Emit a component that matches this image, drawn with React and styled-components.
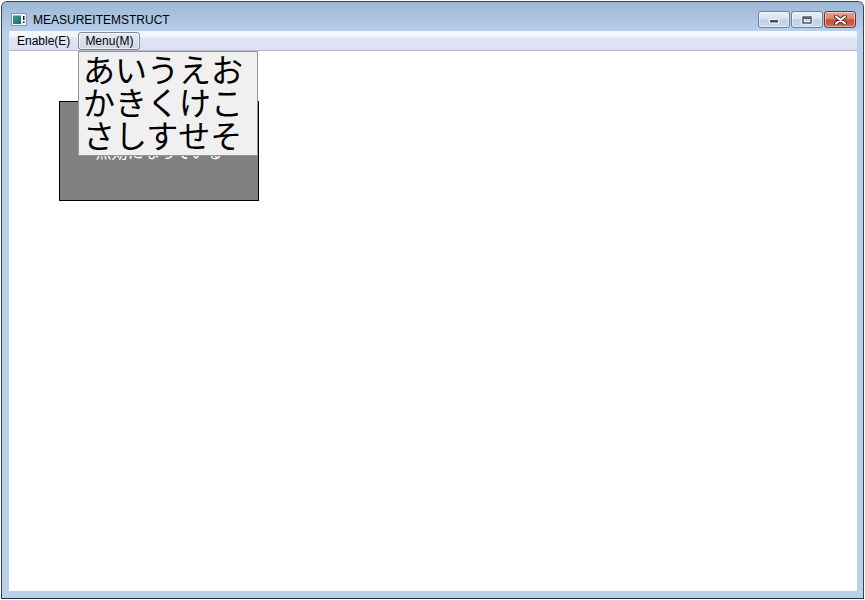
import React from 'react';
import styled, { createGlobalStyle } from 'styled-components';

const GlobalStyle = createGlobalStyle`
  html, body {
    margin: 0;
    padding: 0;
    background: #ffffff;
  }
  body {
    font-family: "Liberation Sans", "Noto Sans CJK JP", sans-serif;
  }
`;

const Desktop = styled.div`
  width: 865px;
  height: 600px;
  padding: 1px 0 0 1px;
  box-sizing: border-box;
  overflow: hidden;
`;

const Window = styled.div`
  width: 863px;
  height: 598px;
  box-sizing: border-box;
  border: 1px solid #3b4049;
  border-bottom-color: #17323f;
  border-radius: 6px 6px 0 0;
  background: #b9d1ea;
  display: flex;
  flex-direction: column;
  overflow: hidden;
`;

const TitleBar = styled.div`
  height: 29px;
  box-sizing: border-box;
  padding: 6px 7px 0 9px;
  display: flex;
  align-items: center;
  background: linear-gradient(to bottom, #9cb7d6, #b8cfe9);
`;

const Title = styled.span`
  margin-left: 6px;
  font-size: 12px;
  color: #000;
  white-space: nowrap;
`;

const CaptionGroup = styled.div`
  margin-left: auto;
  display: flex;
  gap: 1px;
`;

const CaptionButton = styled.div`
  width: 32px;
  height: 17px;
  box-sizing: border-box;
  border: 1px solid ${p => (p.$close ? '#7b3126' : '#6f809a')};
  border-radius: 3px;
  display: flex;
  align-items: center;
  justify-content: center;
  box-shadow: inset 0 0 0 1px rgba(255, 255, 255, 0.45);
  background: ${p =>
    p.$close
      ? 'linear-gradient(to bottom, #eaa593 0%, #d98470 45%, #c44c38 52%, #d26d56 100%)'
      : 'linear-gradient(to bottom, #e7eef8 0%, #d6e2f0 45%, #bfd1e7 52%, #cadaed 100%)'};
`;

const Frame = styled.div`
  flex: 1;
  display: flex;
  flex-direction: column;
  padding: 0 6px 7px 7px;
  min-height: 0;
`;

const MenuBar = styled.div`
  height: 20px;
  box-sizing: border-box;
  padding: 1px 0 0 1px;
  display: flex;
  gap: 1px;
  border-bottom: 1px solid #b3bbcb;
  background: linear-gradient(
    to bottom,
    #f6f8fc 0%,
    #f3f6fb 30%,
    #e0e6f4 36%,
    #dbe1f1 100%
  );
`;

const MenuItem = styled.div`
  padding: 0 6px;
  display: flex;
  align-items: center;
  font-size: 12px;
  color: #000;
  border: 1px solid ${p => (p.$open ? '#848b99' : 'transparent')};
  border-radius: 3px;
  background: ${p =>
    p.$open ? 'linear-gradient(to bottom, #e6eaf3, #cfd6e6)' : 'transparent'};
  box-shadow: ${p => (p.$open ? 'inset 0 0 0 1px rgba(255,255,255,0.55)' : 'none')};
`;

const Client = styled.div`
  flex: 1;
  position: relative;
  background: #ffffff;
  padding: 50px 0 0 50px;
  box-sizing: border-box;
`;

const DisabledBox = styled.div`
  width: 200px;
  height: 100px;
  box-sizing: border-box;
  background: #808080;
  border: 1px solid #000;
  color: #fff;
  font-family: "Noto Sans CJK JP", sans-serif;
  font-size: 16px;
  display: flex;
  align-items: center;
  justify-content: center;
`;

const Popup = styled.div`
  position: absolute;
  left: 69px;
  top: 0;
  width: 180px;
  height: 105px;
  box-sizing: border-box;
  background: #f0f0f0;
  border: 1px solid #979797;
  padding: 0 0 0 4px;
`;

const PopupItem = styled.div`
  height: 33px;
  line-height: 33px;
  overflow: hidden;
  font-family: "Noto Sans CJK JP", sans-serif;
  font-size: 32px;
  color: #000;
  white-space: nowrap;
`;

const AppIcon = () => (
  <svg width="16" height="14" viewBox="0 0 16 14">
    <defs>
      <linearGradient id="ig" x1="0" y1="0" x2="1" y2="1">
        <stop offset="0" stopColor="#3a9a8a" />
        <stop offset="1" stopColor="#1f6f6a" />
      </linearGradient>
    </defs>
    <rect x="0.5" y="0.5" width="15" height="12" fill="#f4f7fa" stroke="#8a96a4" />
    <rect x="2" y="2.5" width="8" height="8.5" fill="url(#ig)" />
    <rect x="12" y="3" width="1.5" height="4" fill="#111" />
    <rect x="12" y="8.5" width="1.5" height="1.5" fill="#111" />
  </svg>
);

const MinGlyph = () => (
  <svg width="12" height="9" viewBox="0 0 12 9">
    <rect x="1.5" y="4.5" width="9" height="3.5" fill="#3f4b5a" stroke="#fff" strokeWidth="1" />
  </svg>
);

const MaxGlyph = () => (
  <svg width="12" height="10" viewBox="0 0 12 10">
    <rect x="2" y="2" width="8" height="6" fill="none" stroke="#fff" strokeWidth="3" />
    <rect x="2" y="2" width="8" height="6" fill="none" stroke="#3f4b5a" strokeWidth="1.4" />
    <rect x="2.5" y="2.5" width="7" height="1.4" fill="#3f4b5a" />
  </svg>
);

const CloseGlyph = () => (
  <svg width="13" height="10" viewBox="0 0 13 10">
    <path d="M2 1.5 L11 8.5 M11 1.5 L2 8.5" stroke="#5a2018" strokeWidth="4" strokeLinecap="round" />
    <path d="M2 1.5 L11 8.5 M11 1.5 L2 8.5" stroke="#fff" strokeWidth="2.2" strokeLinecap="round" />
  </svg>
);

const rows = ['あいうえお', 'かきくけこ', 'さしすせそ'];

const App = () => (
  <>
    <GlobalStyle />
    <Desktop>
      <Window>
        <TitleBar>
          <AppIcon />
          <Title>MEASUREITEMSTRUCT</Title>
          <CaptionGroup>
            <CaptionButton><MinGlyph /></CaptionButton>
            <CaptionButton><MaxGlyph /></CaptionButton>
            <CaptionButton $close><CloseGlyph /></CaptionButton>
          </CaptionGroup>
        </TitleBar>
        <Frame>
          <MenuBar>
            <MenuItem>Enable(E)</MenuItem>
            <MenuItem $open>Menu(M)</MenuItem>
          </MenuBar>
          <Client>
            <DisabledBox>無効になっている</DisabledBox>
            <Popup>
              {rows.map(r => (
                <PopupItem key={r}>{r}</PopupItem>
              ))}
            </Popup>
          </Client>
        </Frame>
      </Window>
    </Desktop>
  </>
);

export default App;
